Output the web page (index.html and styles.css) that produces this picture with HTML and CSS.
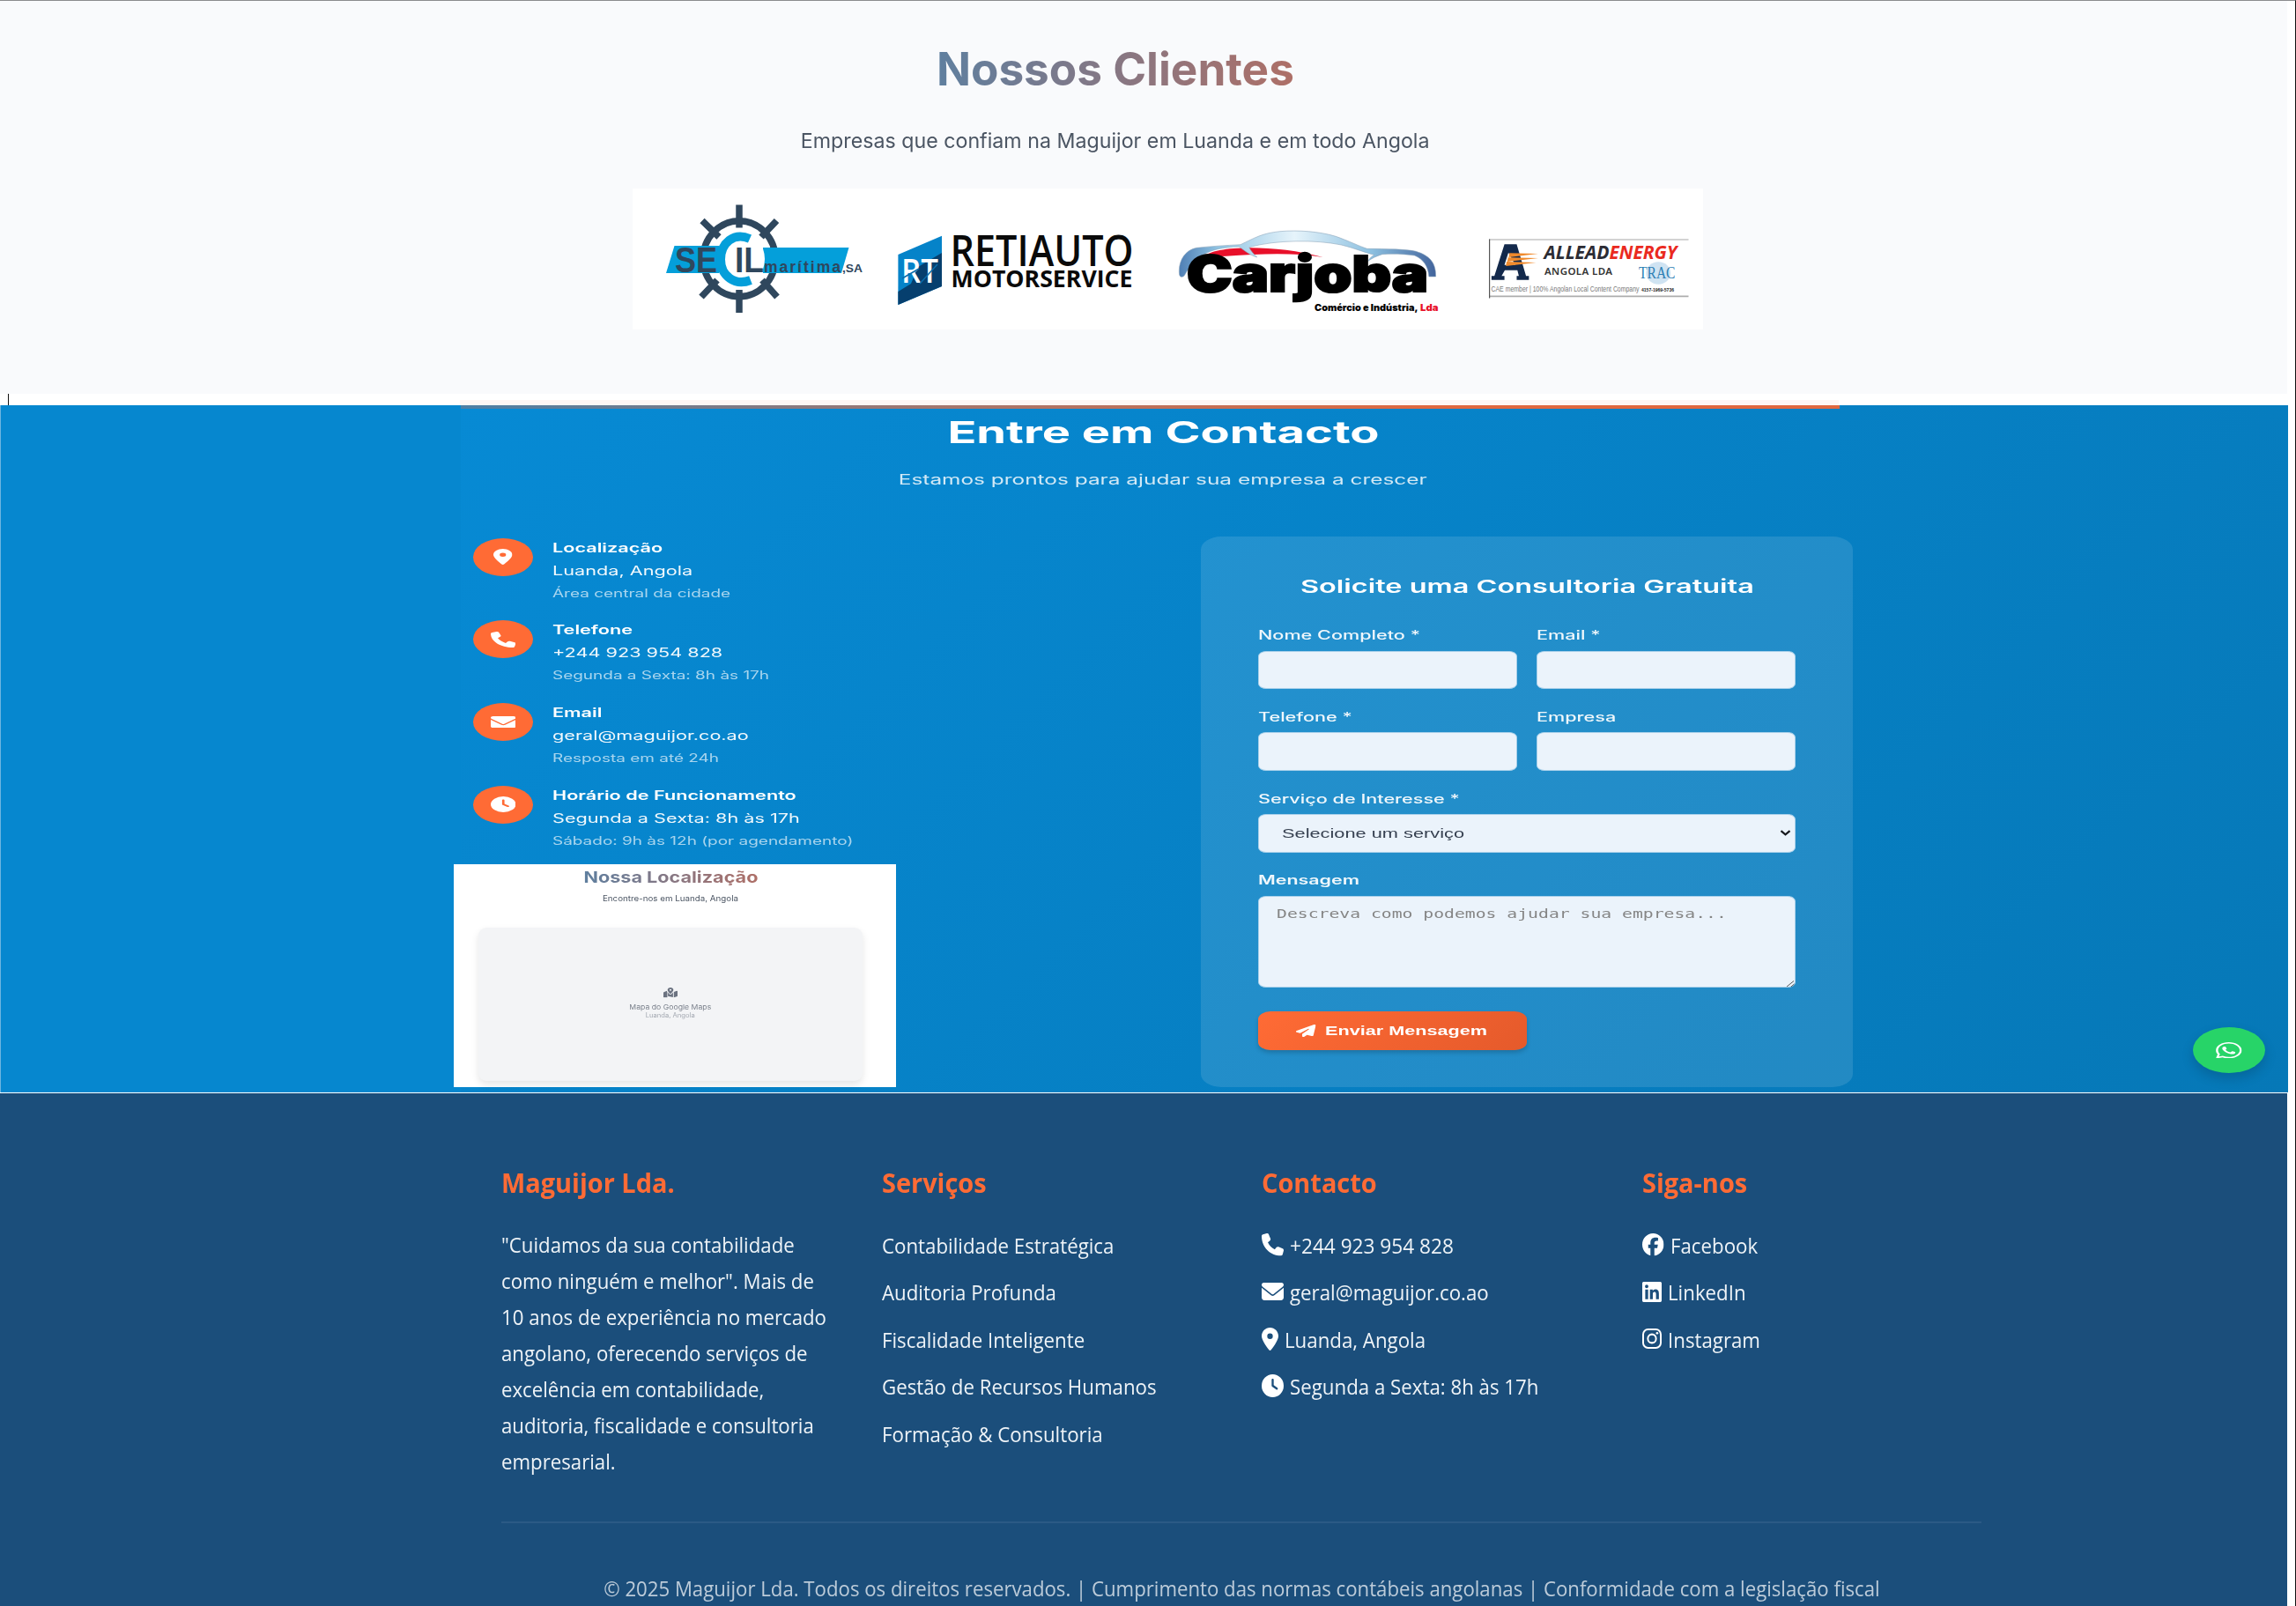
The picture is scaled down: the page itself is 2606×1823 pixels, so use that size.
FILE: index.html
```html
<!DOCTYPE html>
<html lang="pt">
<head>
<meta charset="utf-8">
<title>Maguijor Lda.</title>
<link rel="stylesheet" href="styles.css">
</head>
<body>
<svg class="sprite" aria-hidden="true">
  <symbol id="phone" viewBox="0 0 512 512" preserveAspectRatio="none"><path d="M164.9 24.6c-7.7-18.6-28-28.5-47.4-23.2l-88 24C12.1 30.2 0 46 0 64C0 311.4 200.6 512 448 512c18 0 33.8-12.1 38.6-29.5l24-88c5.3-19.4-4.6-39.7-23.2-47.4l-96-40c-16.3-6.8-35.2-2.1-46.3 11.6L304.7 368C234.3 334.7 177.3 277.7 144 207.3L193.3 167c13.7-11.2 18.4-30 11.6-46.3l-40-96z"/></symbol>
  <symbol id="mail" viewBox="0 64 512 384" preserveAspectRatio="none"><path d="M48 64C21.5 64 0 85.5 0 112c0 15.1 7.1 29.3 19.2 38.4L236.8 313.6c11.4 8.5 27 8.5 38.4 0L492.8 150.4c12.1-9.1 19.2-23.3 19.2-38.4c0-26.5-21.5-48-48-48H48zM0 176V384c0 35.3 28.7 64 64 64H448c35.3 0 64-28.7 64-64V176L294.4 339.2c-22.8 17.1-54 17.1-76.8 0L0 176z"/></symbol>
  <symbol id="pin" viewBox="0 0 384 512" preserveAspectRatio="none"><path d="M215.7 499.2C267 435 384 279.4 384 192C384 86 298 0 192 0S0 86 0 192c0 87.4 117 243 168.3 307.2c12.3 15.3 35.1 15.3 47.4 0zM192 128a64 64 0 1 1 0 128 64 64 0 1 1 0-128z"/></symbol>
  <symbol id="clock" viewBox="0 0 512 512" preserveAspectRatio="none"><path d="M256 0a256 256 0 1 1 0 512A256 256 0 1 1 256 0zM232 120V256c0 8 4 15.5 10.7 20l96 64c11 7.4 25.9 4.4 33.3-6.7s4.4-25.9-6.7-33.3L280 243.2V120c0-13.3-10.7-24-24-24s-24 10.7-24 24z"/></symbol>
  <symbol id="plane" viewBox="0 0 512 512" preserveAspectRatio="none"><path d="M498.1 5.6c10.1 7 15.4 19.1 13.5 31.2l-64 416c-1.5 9.7-7.4 18.2-16 23s-18.9 5.4-28 1.6L284 427.7l-68.5 74.1c-8.9 9.7-22.9 12.9-35.2 8.1S160 493.2 160 480V396.4c0-4 1.5-7.8 4.2-10.7L331.8 202.8c5.8-6.3 5.6-16-.4-22s-15.7-6.4-22-.7L106 360.8 17.7 316.6C7.1 311.3 .3 300.7 0 288.9s5.9-22.8 16.1-28.7l448-256c10.7-6.1 23.9-5.5 34 1.4z"/></symbol>
  <symbol id="whatsapp" viewBox="0 32 448 448" preserveAspectRatio="none"><path d="M380.9 97.1C339 55.1 283.2 32 223.9 32c-122.4 0-222 99.6-222 222 0 39.1 10.2 77.3 29.6 111L0 480l117.7-30.9c32.4 17.7 68.9 27 106.1 27h.1c122.3 0 224.1-99.6 224.1-222 0-59.3-25.2-115-67.1-157zm-157 341.6c-33.2 0-65.7-8.9-94-25.7l-6.7-4-69.8 18.3L72 359.2l-4.4-7c-18.5-29.4-28.2-63.3-28.2-98.2 0-101.7 82.8-184.5 184.6-184.5 49.3 0 95.6 19.2 130.4 54.1 34.8 34.9 56.2 81.2 56.1 130.5 0 101.8-84.9 184.6-186.6 184.6zm101.2-138.2c-5.5-2.8-32.8-16.2-37.9-18-5.1-1.9-8.8-2.8-12.5 2.8-3.7 5.6-14.3 18-17.6 21.8-3.2 3.7-6.5 4.2-12 1.4-32.6-16.3-54-29.1-75.5-66-5.7-9.8 5.7-9.1 16.3-30.3 1.8-3.7.9-6.9-.5-9.7-1.4-2.8-12.5-30.1-17.1-41.2-4.5-10.8-9.1-9.3-12.5-9.5-3.2-.2-6.9-.2-10.6-.2-3.7 0-9.7 1.4-14.8 6.9-5.1 5.6-19.4 19-19.4 46.3 0 27.3 19.9 53.7 22.6 57.4 2.8 3.7 39.1 59.7 94.8 83.8 35.2 15.2 49 16.5 66.6 13.9 10.7-1.6 32.8-13.4 37.4-26.4 4.6-13 4.6-24.1 3.2-26.4-1.3-2.5-5-3.9-10.5-6.6z"/></symbol>
  <symbol id="facebook" viewBox="0 0 512 512" preserveAspectRatio="none"><path d="M512 256C512 114.6 397.4 0 256 0S0 114.6 0 256C0 376 82.7 476.8 194.2 504.5V334.2H141.4V256h52.8V222.3c0-87.1 39.4-127.5 125-127.5c16.2 0 44.2 3.2 55.7 6.4V172c-6-.6-16.5-1-29.6-1c-42 0-58.2 15.9-58.2 57.2V256h83.6l-14.4 78.2H287V510.1C413.8 494.8 512 386.9 512 256h0z"/></symbol>
  <symbol id="linkedin" viewBox="0 32 448 448" preserveAspectRatio="none"><path d="M416 32H31.9C14.3 32 0 46.5 0 64.3v383.4C0 465.5 14.3 480 31.9 480H416c17.6 0 32-14.5 32-32.3V64.3c0-17.8-14.4-32.3-32-32.3zM135.4 416H69V202.2h66.5V416zm-33.2-243c-21.3 0-38.5-17.3-38.5-38.5S80.9 96 102.2 96c21.2 0 38.5 17.3 38.5 38.5 0 21.3-17.2 38.5-38.5 38.5zm282.1 243h-66.4V312c0-24.8-.5-56.7-34.5-56.7-34.6 0-39.9 27-39.9 54.9V416h-66.4V202.2h63.7v29.2h.9c8.9-16.8 30.6-34.5 62.9-34.5 67.2 0 79.7 44.3 79.7 101.9V416z"/></symbol>
  <symbol id="instagram" viewBox="0 0 448 448" preserveAspectRatio="none"><rect x="20" y="20" width="408" height="408" rx="112" fill="none" stroke="currentColor" stroke-width="40"/><circle cx="224" cy="224" r="95" fill="none" stroke="currentColor" stroke-width="40"/><circle cx="344" cy="104" r="27"/></symbol>
  <symbol id="map" viewBox="0 0 576 512" preserveAspectRatio="none"><path fill-rule="evenodd" d="M408 120c0 54.600-73.100 151.900-105.200 192c-7.700 9.600-22 9.600-29.600 0C241.100 271.900 168 174.600 168 120C168 53.700 221.700 0 288 0s120 53.700 120 120zM288 80a40 40 0 1 0 0 80 40 40 0 1 0 0-80z"/><path d="M425 219l117-47c16-6 34 5 34 22v230c0 10-6 19-15 22l-136 55zM138 165c2 21 12 44 22 65v271L34 503c-16 6-34-5-34-22V251c0-10 6-19 15-22zM328 332c20-25 42-54 64-84v244l-208-59V248c22 30 40 57 62 84 21 26 61 26 82 0z"/></symbol>
</svg>

<section class="clients">
  <h2 class="clients-title"><span>Nossos Clientes</span></h2>
  <p class="clients-sub"><span>Empresas que confiam na Maguijor em Luanda e em todo Angola</span></p>
  <div class="logo-strip">
    <svg class="logo" width="292" height="160" viewBox="718 214 292 160">
      <g fill="none" stroke="#2f475d">
        <ellipse cx="839" cy="293.700" rx="41" ry="43" stroke-width="7.500"/>
        <path stroke-width="7.500" d="M839 232.500V258.500M839 329V355M797 250.500L816 269M881.500 250.500L864 269M796 337L814 318M882 337L865 318"/>
      </g>
      <path fill="#049fda" d="M765.500 279H816V310H756ZM866 281H963.500L955 310H866Z"/>
      <ellipse cx="841" cy="294" rx="27" ry="31" fill="#fff"/>
      <path fill="none" stroke="#049fda" stroke-width="10" d="M851 271C833 263 818 276 818 294.500C818 313 834 325 852 318"/>
      <g fill="#2f475d" font-family="Liberation Sans, sans-serif" font-weight="700">
        <text x="766" y="308.700" font-size="40" textLength="48" lengthAdjust="spacingAndGlyphs">SE</text>
        <text x="834" y="308.700" font-size="40" textLength="33" lengthAdjust="spacingAndGlyphs">IL</text>
        <text x="867" y="309" font-size="17.500" textLength="87" lengthAdjust="spacing">marítima</text>
        <text x="956" y="309" font-size="13" textLength="23" lengthAdjust="spacingAndGlyphs">,SA</text>
      </g>
    </svg>
    <svg class="logo" width="310" height="160" viewBox="1010 214 310 160">
      <path fill="#0583c9" d="M1019.400 289L1069 267.700V325L1019.400 346Z"/>
      <path fill="#063f6e" d="M1069 287L1042 303L1034 322L1019.400 331V346L1069 325Z"/>
      <text x="1023" y="321" fill="#fff" font-family="Open Sans, sans-serif" font-weight="600" font-size="37" textLength="42" lengthAdjust="spacingAndGlyphs">RT</text>
      <path stroke="#0a6cab" stroke-width="1.500" d="M1024 316L1043 305M1044 322L1064 300"/>
      <g fill="#0a0a0a" font-family="Open Sans, sans-serif">
        <text x="1078.500" y="301.500" font-size="48" font-weight="600" textLength="208" lengthAdjust="spacingAndGlyphs">RETIAUTO</text>
        <text x="1079.500" y="325.500" font-size="26.500" font-weight="700" textLength="206" lengthAdjust="spacingAndGlyphs">MOTORSERVICE</text>
      </g>
    </svg>
    <svg class="logo" width="350" height="160" viewBox="1320 214 350 160">
      <defs>
        <linearGradient id="car" x1="0" x2="1"><stop offset="0" stop-color="#4f7fb5"/><stop offset=".15" stop-color="#8fc3e2"/><stop offset=".45" stop-color="#e6f4fb"/><stop offset=".75" stop-color="#8cc0e0"/><stop offset="1" stop-color="#42649c"/></linearGradient>
      </defs>
      <g transform="translate(1310 210) scale(.4082 .3333)">
        <path fill="#e8102a" d="M135 246C165 206 330 200 470 246C390 230 300 234 200 242Z"/>
        <path fill="url(#car)" stroke="#8aa3b8" stroke-width="1.500" d="M70 305C66 262 84 222 118 214C160 208 200 206 240 203C280 180 300 164 350 158C400 153 460 158 505 175C540 190 570 208 592 217C650 218 700 218 728 226C764 240 784 262 783 312H764C762 276 748 252 724 240C690 234 660 234 634 236C618 242 604 250 594 260C600 248 606 242 612 238C590 232 560 216 520 204C450 186 340 186 264 212C268 224 278 236 286 246C264 238 250 222 236 210C190 212 160 220 136 238C112 252 100 276 84 308C78 316 72 314 70 305Z"/>
      </g>
      <text x="1347" y="331" fill="#000" stroke="#000" stroke-width="2.200" font-family="Inter, sans-serif" font-weight="900" font-size="56" textLength="274" lengthAdjust="spacingAndGlyphs">Carjoba</text>
      <g font-family="Inter, sans-serif" font-weight="900" font-size="10.500">
        <text x="1492" y="352.700" fill="#000" textLength="117.500" lengthAdjust="spacingAndGlyphs">Comércio e Indústria,</text>
        <text x="1612" y="352.700" fill="#e8102a" textLength="20.500" lengthAdjust="spacingAndGlyphs">Lda</text>
      </g>
    </svg>
    <svg class="logo" width="263" height="160" viewBox="1670 214 263 160">
      <path fill="#d3d3d3" d="M1690 271H1916.500V273H1690Z"/>
      <path fill="#adadad" d="M1690 335.500H1916.500V337.200H1690Z"/>
      <path fill="#555" d="M1690 271.500H1691.200V338.500H1690Z"/>
      <g transform="translate(1310 210) scale(.4082 .3333)">
        <path fill="#13294b" fill-rule="evenodd" d="M974 202H1008L1034 310H1042V323H1008V310H1014L1010 290H975L966 310H974V323H938V310H946ZM985 230L974 272H1004Z"/>
        <path fill="#f08a2c" d="M988 232L1068 234L986 246ZM984 247L1068 249L982 261ZM980 261L1062 264L978 276Z"/>
        <ellipse cx="1402" cy="300" rx="34" ry="38" fill="#cfe3f2"/>
      </g>
      <g font-family="Noto Sans, sans-serif" font-weight="700">
        <g font-style="italic" font-size="20.500"><text x="1752.500" y="293.500" fill="#2c2c34" textLength="74" lengthAdjust="spacingAndGlyphs">ALLEAD</text>
        <text x="1826.500" y="293.500" fill="#ea2a1f" textLength="77" lengthAdjust="spacingAndGlyphs">ENERGY</text></g>
        <text x="1753" y="312" font-size="11.500" font-weight="600" fill="#333" textLength="77" lengthAdjust="spacing">ANGOLA LDA</text>
      </g>
      <text x="1860" y="316" fill="#2e7fb4" font-family="Liberation Serif, serif" font-size="18.500" textLength="41.500" lengthAdjust="spacingAndGlyphs">TRAC</text>
      <text x="1692.500" y="331.300" fill="#777" font-family="Liberation Sans, sans-serif" font-size="8.500" textLength="168" lengthAdjust="spacingAndGlyphs">CAE member | 100% Angolan Local Content Company</text>
      <text x="1863" y="331" fill="#222" font-family="Liberation Sans, sans-serif" font-weight="700" font-size="6" textLength="37" lengthAdjust="spacingAndGlyphs">4157-1969-5736</text>
    </svg>
  </div>
</section>
<div class="divider"><i class="caret"></i><i class="blush"></i></div>

<section class="contact">
  <div class="contact-main">
    <header class="contact-head">
      <h2><span>Entre em Contacto</span></h2>
      <p><span>Estamos prontos para ajudar sua empresa a crescer</span></p>
    </header>
    <div class="contact-cols">
      <div class="info">
        <div class="info-item"><span class="bubble"><svg width="21.500" height="18"><use href="#pin"/></svg></span><div><h4>Localização</h4><p>Luanda, Angola</p><small>Área central da cidade</small></div></div>
        <div class="info-item"><span class="bubble"><svg width="28.500" height="18"><use href="#phone"/></svg></span><div><h4>Telefone</h4><p>+244 923 954 828</p><small>Segunda a Sexta: 8h às 17h</small></div></div>
        <div class="info-item"><span class="bubble"><svg width="28.500" height="13.500"><use href="#mail"/></svg></span><div><h4>Email</h4><p>geral@maguijor.co.ao</p><small>Resposta em até 24h</small></div></div>
        <div class="info-item"><span class="bubble"><svg width="28.500" height="18"><use href="#clock"/></svg></span><div><h4>Horário de Funcionamento</h4><p>Segunda a Sexta: 8h às 17h</p><small>Sábado: 9h às 12h (por agendamento)</small></div></div>
        <div class="map-card">
          <h3><span>Nossa Localização</span></h3>
          <p class="map-sub"><span>Encontre-nos em Luanda, Angola</span></p>
          <div class="map-box">
            <svg width="16" height="11.500"><use href="#map"/></svg>
            <p class="map-name"><span>Mapa do Google Maps</span></p>
            <p class="map-city"><span>Luanda, Angola</span></p>
          </div>
        </div>
      </div>
      <form class="form-card">
        <h3><span>Solicite uma Consultoria Gratuita</span></h3>
        <div class="fields">
          <div><label>Nome Completo *</label><input></div>
          <div><label>Email *</label><input></div>
          <div><label>Telefone *</label><input></div>
          <div><label>Empresa</label><input></div>
          <div class="wide"><label>Serviço de Interesse *</label><div class="box select"><span>Selecione um serviço</span><svg width="13" height="7" viewBox="0 0 13 7"><path d="M1.500 1.200L6.500 5.300L11.500 1.200" fill="none" stroke="#16181d" stroke-width="2.200"/></svg></div></div>
          <div class="wide"><label class="strong">Mensagem</label><div class="box area"><span>Descreva como podemos ajudar sua empresa...</span><svg width="10" height="7" viewBox="0 0 10 7"><path d="M1 7L9 .5M6 7L9.500 4" stroke="#555" stroke-width="1" fill="none"/></svg></div></div>
        </div>
        <button type="button"><svg width="22.500" height="14"><use href="#plane"/></svg><span>Enviar Mensagem</span></button>
      </form>
    </div>
  </div>
  <a class="whatsapp"><svg width="29.500" height="18.500"><use href="#whatsapp"/></svg></a>
</section>

<footer>
  <div class="foot-inner">
    <div class="foot-cols">
      <div><h3>Maguijor Lda.</h3>
        <p>"Cuidamos da sua contabilidade<br>como ninguém e melhor". Mais de<br>10 anos de experiência no mercado<br>angolano, oferecendo serviços de<br>excelência em contabilidade,<br>auditoria, fiscalidade e consultoria<br>empresarial.</p></div>
      <div><h3>Serviços</h3>
        <ul><li><span>Contabilidade Estratégica</span></li><li><span>Auditoria Profunda</span></li><li><span>Fiscalidade Inteligente</span></li><li><span>Gestão de Recursos Humanos</span></li><li><span>Formação &amp; Consultoria</span></li></ul></div>
      <div><h3>Contacto</h3>
        <ul><li><svg width="25" height="25.500"><use href="#phone"/></svg><span class="num">+244 923 954 828</span></li><li><svg width="25" height="20"><use href="#mail"/></svg><span>geral@maguijor.co.ao</span></li><li><svg width="19" height="26"><use href="#pin"/></svg><span>Luanda, Angola</span></li><li><svg width="25" height="26"><use href="#clock"/></svg><span>Segunda a Sexta: 8h às 17h</span></li></ul></div>
      <div><h3>Siga-nos</h3>
        <ul><li><svg width="24.500" height="25.500"><use href="#facebook"/></svg><span>Facebook</span></li><li><svg width="22" height="23"><use href="#linkedin"/></svg><span>LinkedIn</span></li><li><svg width="22" height="23"><use href="#instagram"/></svg><span>Instagram</span></li></ul></div>
    </div>
    <p class="copy"><span>© 2025 Maguijor Lda. Todos os direitos reservados. | Cumprimento das normas contábeis angolanas | Conformidade com a legislação fiscal</span></p>
  </div>
</footer>
</body>
</html>
```
FILE: styles.css
```css
*{box-sizing:border-box;margin:0;padding:0}
body{width:2606px;height:1823px;overflow:hidden;background:#fff;font-family:Inter,sans-serif;border-top:1px solid #8b8c8e;border-right:1px solid #111}
h2,h3,h4,p,label,small,span{white-space:nowrap}
h4,label,small,li{display:block}
svg{display:block;flex:none;fill:currentColor}
.sprite{display:none}

/* clients */
.clients{width:2596px;height:446px;background:#f9fafc;padding-top:48px}
.clients-title,.clients-sub{width:2531px;display:flex;justify-content:center}
.clients-title{height:60px;line-height:60px;font-size:52px;font-weight:700}
.clients-title span{transform:scaleX(.986);background:linear-gradient(90deg,#5f7f9f,#ae6f67);-webkit-background-clip:text;background-clip:text;color:transparent}
.clients-sub{height:34px;line-height:34px;margin-top:33.500px;font-size:23px;color:#4b5563}
.clients-sub span{transform:scaleX(1.009)}
.logo-strip{display:flex;width:1215px;height:160px;margin:37.500px 0 0 718px;background:#fff}
.logo{fill:#000}
.divider{display:flex;height:13px;width:2596px;position:relative}
.caret{width:1px;height:13px;margin-left:9px;background:#111}
.blush{width:1565px;height:6px;margin:7px 0 0 512px;background:#fef6f4}

/* contact */
.contact{width:2597px;height:780px;display:flex;padding-left:522px;background:#0687cf;border-left:1px solid #6cb5e0;color:#fff;position:relative}
.contact-main{width:2075px;background:linear-gradient(135deg,#078ad4 0%,#0678b7 100%);position:relative}
.contact-main::before{content:"";display:block;width:1565px;height:4px;background:linear-gradient(90deg,#4d7fa5,#a5766d 35%,#e0683f 70%,#e0683f)}
.contact-head{width:1594px;padding-top:4.500px}
.contact-head h2,.contact-head p{display:flex;justify-content:center}
.contact-head h2{font-size:34.400px;line-height:44px;font-weight:700}
.contact-head h2 span{transform:scaleX(1.576)}
.contact-head p{font-size:16px;line-height:26px;margin-top:18px;color:rgba(255,255,255,.82)}
.contact-head p span{transform:scaleX(1.525)}
.contact-cols{display:flex;padding:52px 0 0 14px}
.info{width:826px}
.info-item{display:flex;gap:21.500px;height:78px;margin-bottom:15.800px}
.bubble{width:68px;height:43px;margin-top:2px;border-radius:50%;background:#ff6b35;display:flex;align-items:center;justify-content:center}
.info h4,.info-item p,.info small{width:max-content;line-height:26px;font-size:14.300px;transform-origin:0 50%;transform:scaleX(1.514)}
.info h4{font-weight:600}
.info-item p{color:rgba(255,255,255,.94)}
.info small{font-size:12.800px;transform:scaleX(1.482);color:rgba(255,255,255,.65)}
.map-card{width:502px;height:253px;margin:-3px 0 0 -22px;padding-top:4.500px;background:#fff}
.map-card h3,.map-card p{display:flex;justify-content:center;width:488px;margin-left:2px}
.map-card h3{font-size:18px;line-height:22px;font-weight:700}
.map-card h3 span{transform:scaleX(1.201);background:linear-gradient(90deg,#5f7f9f,#ae6f67);-webkit-background-clip:text;background-clip:text;color:transparent}
.map-card .map-sub{font-size:9px;line-height:14px;margin-top:5.500px;color:#4b5563}
.map-sub span,.map-name span,.map-city span{transform:scaleX(1.086)}
.map-box{width:436px;height:173.500px;margin:26.500px 0 0 28px;padding-top:68px;border-radius:9px;background:#f3f4f6;box-shadow:0 4px 8px rgba(0,0,0,.1);color:#6b7280}
.map-box svg{margin:0 auto}
.map-box p{width:auto;margin:0;line-height:10.500px}
.map-box .map-name{font-size:8px;margin-top:5px;color:#7c828d}
.map-box .map-city{font-size:7px;color:#a3a8b1}

.form-card{width:740px;height:625px;padding:42px 65px 0;border-radius:23px/15px;background:rgba(255,255,255,.115)}
.form-card h3{display:flex;justify-content:center;font-size:20.600px;line-height:30px;font-weight:600}
.form-card h3 span{transform:scaleX(1.576)}
.fields{display:grid;grid-template-columns:294px 294px;column-gap:21.500px;row-gap:21.800px;margin-top:30.600px}
.wide{grid-column:1/3}
label{width:max-content;font-size:14.200px;line-height:20px;margin-bottom:7.500px;font-weight:500;color:rgba(255,255,255,.93);transform:scaleX(1.524);transform-origin:0 50%}
label.strong{font-weight:600;transform:scaleX(1.51)}
input,.box{display:flex;width:100%;height:43.500px;border:1px solid #a9d0ea;border-radius:9px/6px;background:#ebf3fb}
.select{align-items:center;justify-content:space-between;padding:0 4px 0 26px;font:14.500px "Liberation Sans",sans-serif;color:#374151}
.select span{transform:scaleX(1.502);transform-origin:0 50%}
.area{height:103.700px;align-items:flex-end;justify-content:space-between;font:13.300px/20px "DejaVu Sans Mono",monospace;color:#858585;padding-left:20px}
.area span{align-self:flex-start;margin-top:10.500px;transform:scaleX(1.484);transform-origin:0 50%}
button{display:flex;align-items:center;gap:10px;width:305px;height:43.500px;margin-top:27.500px;padding-left:43px;border:0;border-radius:14px/9px;background:linear-gradient(135deg,#ff6b35,#e55a2b);box-shadow:0 3px 5px rgba(0,0,0,.18);color:#fff;font:700 14.300px "Liberation Sans",sans-serif}
button span{transform:scaleX(1.513);transform-origin:0 50%}
.whatsapp{position:absolute;left:2488px;top:706px;width:82px;height:52px;border-radius:50%;background:#27d468;display:flex;align-items:center;justify-content:center;box-shadow:0 6px 14px rgba(0,0,0,.16)}

/* footer */
footer{width:2596px;height:581.500px;margin-top:1px;padding-left:569px;background:#1b4e7b;font-family:"Open Sans","Noto Sans",sans-serif;color:#eef3f7}
.foot-inner{width:1680px;padding-top:81px}
.foot-cols{display:grid;grid-template-columns:repeat(4,385px);column-gap:46.700px;height:407px;border-bottom:2px solid #2b5a85}
footer h3{width:max-content;font-size:31px;line-height:40px;font-weight:700;color:#ff6b35;transform:scaleX(.933);transform-origin:0 50%;margin-bottom:31px}
.foot-cols p{width:max-content;font-size:24.500px;line-height:40.950px;transform:scaleX(.907);transform-origin:0 50%}
ul{list-style:none}
li{display:flex;align-items:center;gap:7px;height:41px;margin-bottom:12.400px;font-size:24.500px;line-height:41px}
li svg{color:#fff;margin-top:-1px}
li span{transform:scaleX(.909);transform-origin:0 50%}
li .num{transform:scaleX(.924)}
.copy{display:flex;justify-content:center;font-size:24.500px;line-height:41px;padding-top:53px;color:#bccbd9}
.copy span{transform:scaleX(.906)}
```
